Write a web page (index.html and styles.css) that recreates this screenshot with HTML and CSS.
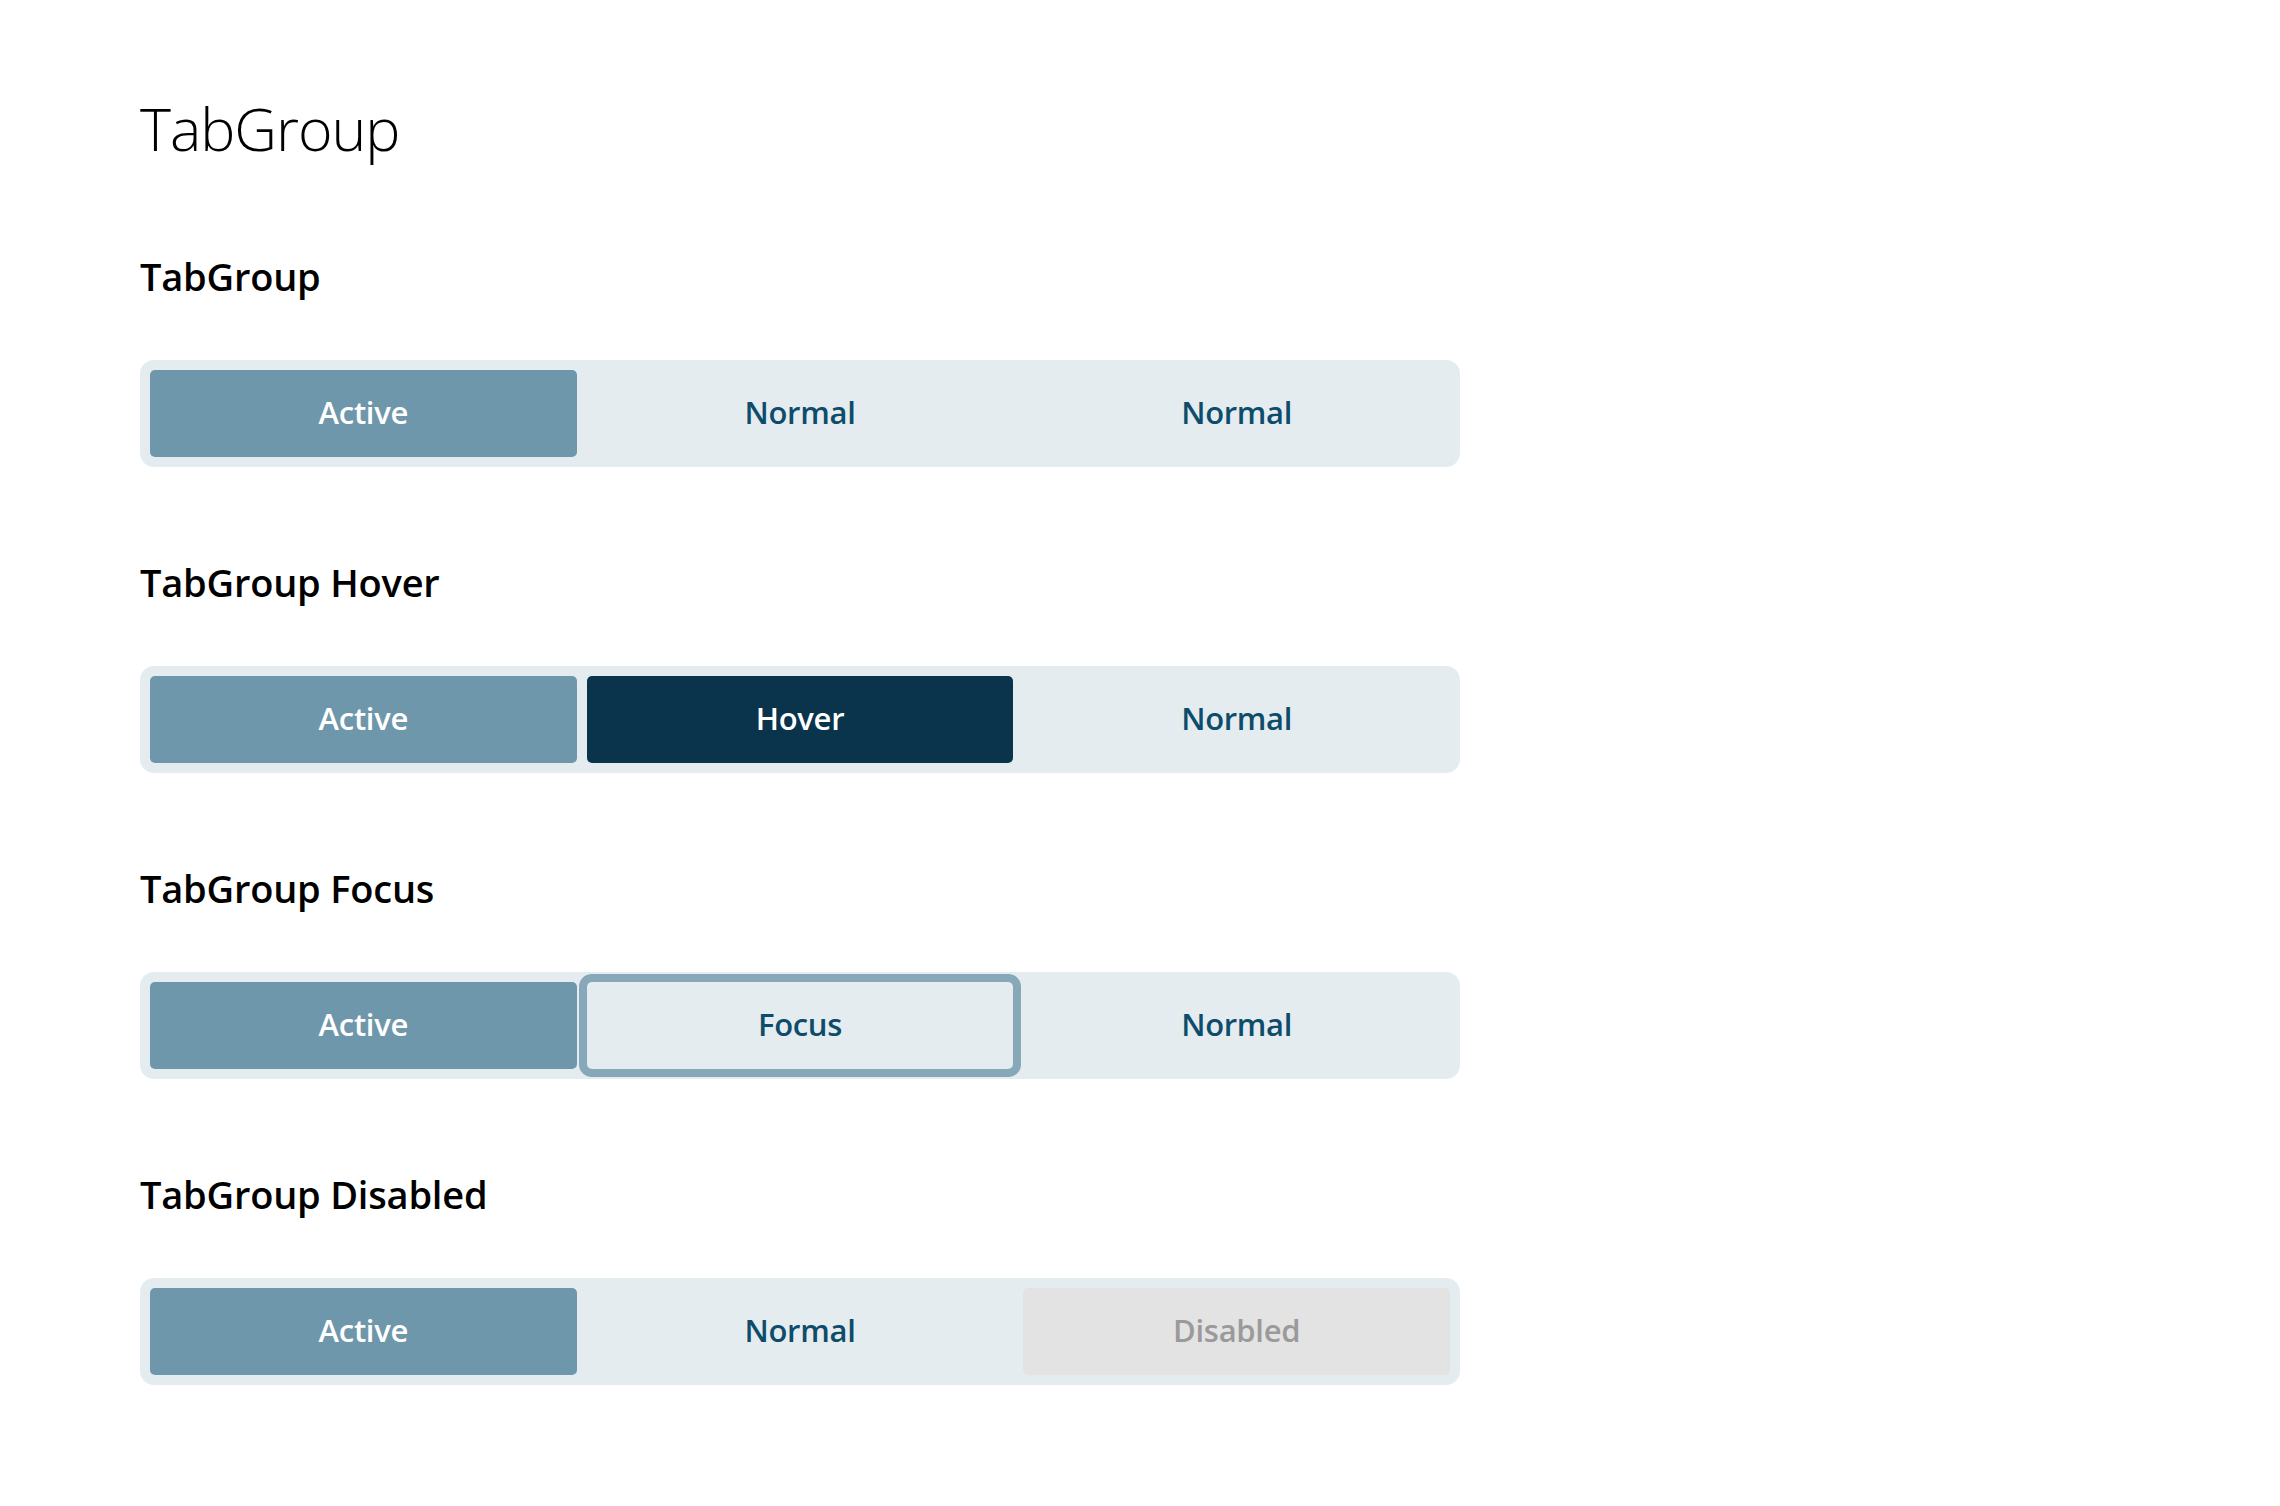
FILE: index.html
```html
<!DOCTYPE html>
<html lang="en">
<head>
<meta charset="utf-8">
<title>TabGroup</title>
<link rel="stylesheet" href="styles.css">
</head>
<body>
<main class="page">
  <h1 class="title">TabGroup</h1>

  <section class="demo">
    <h2 class="demo-heading">TabGroup</h2>
    <div class="tabgroup" role="tablist">
      <div class="tab tab-active" role="tab">Active</div>
      <div class="tab" role="tab">Normal</div>
      <div class="tab" role="tab">Normal</div>
    </div>
  </section>

  <section class="demo">
    <h2 class="demo-heading">TabGroup Hover</h2>
    <div class="tabgroup" role="tablist">
      <div class="tab tab-active" role="tab">Active</div>
      <div class="tab tab-hover" role="tab">Hover</div>
      <div class="tab" role="tab">Normal</div>
    </div>
  </section>

  <section class="demo">
    <h2 class="demo-heading">TabGroup Focus</h2>
    <div class="tabgroup" role="tablist">
      <div class="tab tab-active" role="tab">Active</div>
      <div class="tab tab-focus" role="tab">Focus</div>
      <div class="tab" role="tab">Normal</div>
    </div>
  </section>

  <section class="demo">
    <h2 class="demo-heading">TabGroup Disabled</h2>
    <div class="tabgroup" role="tablist">
      <div class="tab tab-active" role="tab">Active</div>
      <div class="tab" role="tab">Normal</div>
      <div class="tab tab-disabled" role="tab">Disabled</div>
    </div>
  </section>
</main>
</body>
</html>
```

FILE: styles.css
```css
html, body {
  margin: 0;
  padding: 0;
  background: #ffffff;
}

body {
  font-family: "Open Sans", "Noto Sans", "Liberation Sans", sans-serif;
  color: #000000;
}

.page {
  padding: 88px 0 0 140px;
  display: flex;
  flex-direction: column;
}

.title {
  margin: 0 0 82px 0;
  font-size: 59px;
  line-height: 80px;
  font-weight: 300;
  letter-spacing: -1px;
}

.demo {
  display: flex;
  flex-direction: column;
  margin-bottom: 89px;
}

.demo-heading {
  margin: 0 0 58px 0;
  font-size: 38px;
  line-height: 52px;
  font-weight: 600;
  letter-spacing: -0.2px;
}

.tabgroup {
  box-sizing: border-box;
  width: 1320px;
  padding: 10px;
  display: grid;
  grid-template-columns: repeat(3, 1fr);
  column-gap: 10px;
  background: #e5ecf0;
  border-radius: 14px;
}

.tab {
  box-sizing: border-box;
  height: 87px;
  padding-bottom: 3px;
  display: flex;
  align-items: center;
  justify-content: center;
  border-radius: 5px;
  font-size: 31px;
  font-weight: 600;
  color: #0d4c6a;
  letter-spacing: -0.3px;
}

.tab-active {
  background: #6e97ab;
  color: #ffffff;
}

.tab-hover {
  background: #0a344c;
  color: #ffffff;
}

.tab-focus {
  box-shadow: 0 0 0 8px #87a8b8;
}

.tab-disabled {
  background: #e3e3e3;
  color: #9a9a9a;
}
```
